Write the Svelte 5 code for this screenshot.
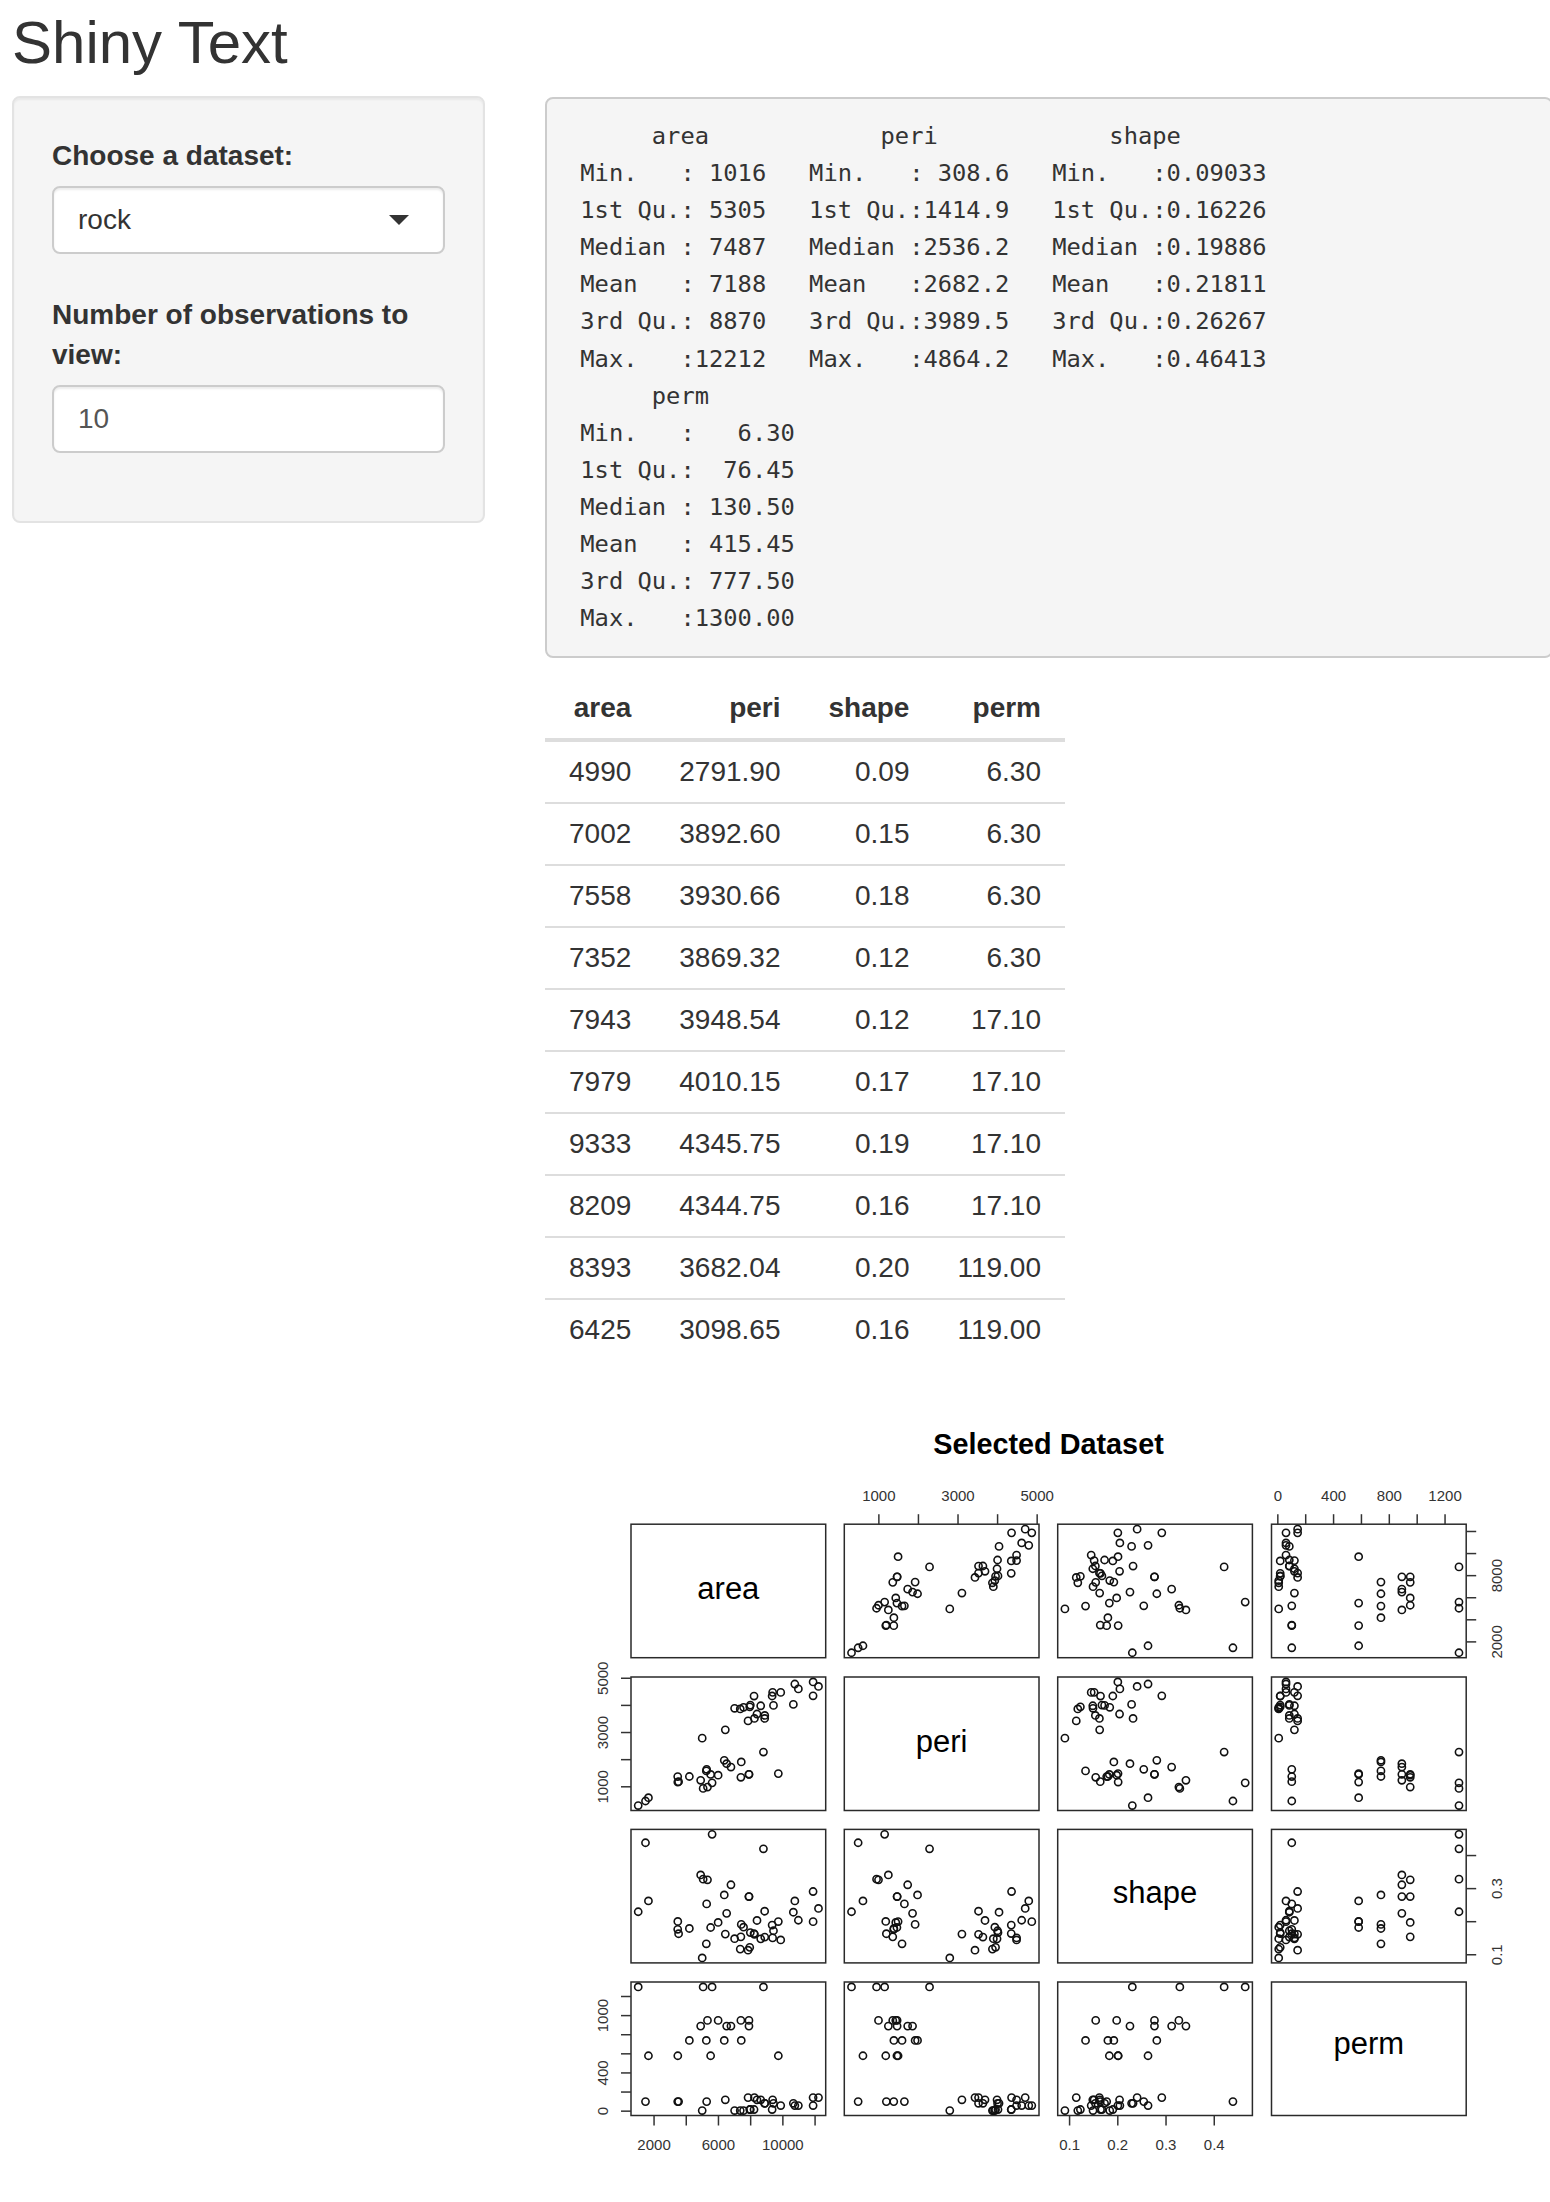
<script>
  // R's built-in rock dataset
  const rock = [
    [4990, 2791.9, 0.0903296, 6.3], [7002, 3892.6, 0.148622, 6.3], [7558, 3930.66, 0.183312, 6.3],
    [7352, 3869.32, 0.117063, 6.3], [7943, 3948.54, 0.122417, 17.1], [7979, 4010.15, 0.167045, 17.1],
    [9333, 4345.75, 0.189651, 17.1], [8209, 4344.75, 0.164127, 17.1], [8393, 3682.04, 0.203654, 119],
    [6425, 3098.65, 0.162394, 119], [9364, 4480.05, 0.150944, 119], [8624, 3986.24, 0.148141, 119],
    [10651, 4036.54, 0.228595, 82.4], [8868, 3518.04, 0.231623, 82.4], [9417, 3999.37, 0.172567, 82.4],
    [8874, 3629.07, 0.153481, 82.4], [10962, 4608.66, 0.204314, 58.6], [10743, 4787.62, 0.262727, 58.6],
    [11878, 4864.22, 0.200071, 58.6], [9867, 4479.41, 0.14481, 58.6], [7838, 3428.74, 0.113852, 142],
    [11876, 4353.14, 0.291229, 142], [12212, 4697.65, 0.240077, 142], [8233, 3518.44, 0.161865, 142],
    [6360, 1977.39, 0.280887, 740], [4193, 1379.35, 0.179455, 740], [7416, 1916.24, 0.191802, 740],
    [5246, 1585.42, 0.133083, 740], [6509, 1851.21, 0.225214, 890], [4895, 1239.66, 0.341273, 890],
    [6775, 1728.14, 0.311646, 890], [7894, 1461.06, 0.276016, 890], [5980, 1426.76, 0.197653, 950],
    [5318, 990.388, 0.326635, 950], [7392, 1350.76, 0.154192, 950], [7894, 1461.06, 0.276016, 950],
    [3469, 1376.7, 0.176969, 100], [1468, 476.322, 0.438712, 100], [3524, 1189.46, 0.163586, 100],
    [5267, 1644.96, 0.253832, 100], [5048, 941.543, 0.328641, 1300], [1016, 308.642, 0.230089, 1300],
    [5605, 1145.69, 0.464125, 1300], [8793, 2280.49, 0.420477, 1300], [3475, 1174.11, 0.200744, 580],
    [1651, 597.808, 0.262654, 580], [5514, 1455.88, 0.182453, 580], [9718, 1485.58, 0.200447, 580]
  ];
  const names = ['area', 'peri', 'shape', 'perm'];
  // baseline offset of the diagonal labels from the panel centre
  const nameDrop = [8, 8, 7, 5];

  const summary = `      area            peri            shape
 Min.   : 1016   Min.   : 308.6   Min.   :0.09033
 1st Qu.: 5305   1st Qu.:1414.9   1st Qu.:0.16226
 Median : 7487   Median :2536.2   Median :0.19886
 Mean   : 7188   Mean   :2682.2   Mean   :0.21811
 3rd Qu.: 8870   3rd Qu.:3989.5   3rd Qu.:0.26267
 Max.   :12212   Max.   :4864.2   Max.   :0.46413
      perm
 Min.   :   6.30
 1st Qu.:  76.45
 Median : 130.50
 Mean   : 415.45
 3rd Qu.: 777.50
 Max.   :1300.00`;

  // plot geometry, in page pixels (the svg viewBox starts at the page position)
  const panelW = 194.7;
  const panelH = 133.5;
  const colX = [631, 844.3, 1057.7, 1271.5];
  const rowY = [1523.2, 1676, 1828.4, 1981];

  const ranges = names.map((_, i) => {
    const v = rock.map((r) => r[i]);
    return [Math.min(...v), Math.max(...v)];
  });

  // par(usr) adds 4% each side
  function px(col, value) {
    const [lo, hi] = ranges[col];
    return colX[col] + (panelW * ((value - lo) / (hi - lo) + 0.04)) / 1.08;
  }
  function py(row, value) {
    const [lo, hi] = ranges[row];
    return rowY[row] + panelH - (panelH * ((value - lo) / (hi - lo) + 0.04)) / 1.08;
  }

  const panels = [];
  for (let r = 0; r < 4; r++) {
    for (let c = 0; c < 4; c++) panels.push({ r, c });
  }

  const topAxes = [
    { col: 1, ticks: [1000, 2000, 3000, 4000, 5000], labels: [1000, 3000, 5000] },
    { col: 3, ticks: [0, 200, 400, 600, 800, 1000, 1200], labels: [0, 400, 800, 1200] }
  ];
  const bottomAxes = [
    { col: 0, ticks: [2000, 4000, 6000, 8000, 10000, 12000], labels: [2000, 6000, 10000] },
    { col: 2, ticks: [0.1, 0.2, 0.3, 0.4], labels: [0.1, 0.2, 0.3, 0.4] }
  ];
  const leftAxes = [
    { row: 1, ticks: [1000, 2000, 3000, 4000, 5000], labels: [1000, 3000, 5000] },
    { row: 3, ticks: [0, 200, 400, 600, 800, 1000, 1200], labels: [0, 400, 1000] }
  ];
  const rightAxes = [
    { row: 0, ticks: [2000, 4000, 6000, 8000, 10000, 12000], labels: [2000, 8000] },
    { row: 2, ticks: [0.1, 0.2, 0.3, 0.4], labels: [0.1, 0.3] }
  ];
</script>

<div class="page">
  <h2>Shiny Text</h2>
  <div class="row">
    <aside class="well">
      <div class="group first">
        <label for="dataset">Choose a dataset:</label>
        <div class="select" id="dataset">
          <span>rock</span>
          <i class="caret"></i>
        </div>
      </div>
      <div class="group">
        <label for="obs">Number of observations to view:</label>
        <input id="obs" type="number" value="10" />
      </div>
    </aside>

    <main>
      <pre>{summary}</pre>

      <table>
        <thead>
          <tr>
            {#each names as name}
              <th>{name}</th>
            {/each}
          </tr>
        </thead>
        <tbody>
          {#each rock.slice(0, 10) as r}
            <tr>
              <td>{r[0]}</td>
              <td>{r[1].toFixed(2)}</td>
              <td>{r[2].toFixed(2)}</td>
              <td>{r[3].toFixed(2)}</td>
            </tr>
          {/each}
        </tbody>
      </table>

      <svg class="plot" width="1005" height="800" viewBox="545 1399 1005 800">
        <text class="title" x="1048.5" y="1453" text-anchor="middle">Selected Dataset</text>

        {#each panels as p}
          <rect class="box" x={colX[p.c]} y={rowY[p.r]} width={panelW} height={panelH} />
          {#if p.r === p.c}
            <text class="var" x={colX[p.c] + panelW / 2} y={rowY[p.r] + panelH / 2 + nameDrop[p.r]} text-anchor="middle">{names[p.r]}</text>
          {:else}
            {#each rock as d}
              <circle class="pt" cx={px(p.c, d[p.c])} cy={py(p.r, d[p.r])} r="3.6" />
            {/each}
          {/if}
        {/each}

        {#each topAxes as a}
          {#each a.ticks as t}
            <line class="tick" x1={px(a.col, t)} x2={px(a.col, t)} y1={rowY[0]} y2={rowY[0] - 10} />
          {/each}
          {#each a.labels as t}
            <text class="axis" x={px(a.col, t)} y="1500" text-anchor="middle">{t}</text>
          {/each}
        {/each}

        {#each bottomAxes as a}
          {#each a.ticks as t}
            <line class="tick" x1={px(a.col, t)} x2={px(a.col, t)} y1={rowY[3] + panelH} y2={rowY[3] + panelH + 10} />
          {/each}
          {#each a.labels as t}
            <text class="axis" x={px(a.col, t)} y="2148.5" text-anchor="middle">{t}</text>
          {/each}
        {/each}

        {#each leftAxes as a}
          {#each a.ticks as t}
            <line class="tick" x1={colX[0]} x2={colX[0] - 10} y1={py(a.row, t)} y2={py(a.row, t)} />
          {/each}
          {#each a.labels as t}
            <text class="axis" transform="translate(608 {py(a.row, t)}) rotate(-90)" text-anchor="middle">{t}</text>
          {/each}
        {/each}

        {#each rightAxes as a}
          {#each a.ticks as t}
            <line class="tick" x1={colX[3] + panelW} x2={colX[3] + panelW + 10} y1={py(a.row, t)} y2={py(a.row, t)} />
          {/each}
          {#each a.labels as t}
            <text class="axis" transform="translate(1501.5 {py(a.row, t)}) rotate(-90)" text-anchor="middle">{t}</text>
          {/each}
        {/each}
      </svg>
    </main>
  </div>
</div>

<style>
  :global(body) {
    margin: 0;
    background: #fff;
    overflow-x: hidden;
  }

  .page {
    width: 1550px;
    padding-left: 12px;
    box-sizing: border-box;
    overflow: hidden;
    font-family: "Liberation Sans", Arial, sans-serif;
    font-size: 28px;
    line-height: 40px;
    color: #333;
  }

  h2 {
    margin: 10px 0 20px;
    font-size: 60px;
    font-weight: 400;
    line-height: 66px;
  }

  .row {
    display: flex;
    align-items: flex-start;
    gap: 60px;
  }

  .well {
    flex: none;
    width: 473px;
    box-sizing: border-box;
    padding: 38px;
    background: #f5f5f5;
    border: 2px solid #e3e3e3;
    border-radius: 8px;
    box-shadow: inset 0 2px 2px rgba(0, 0, 0, 0.05);
  }

  .group {
    margin-bottom: 30px;
  }

  .group.first {
    margin-bottom: 41px;
  }

  label {
    display: block;
    margin-bottom: 10px;
    font-weight: 700;
  }

  .select,
  input {
    display: flex;
    align-items: center;
    justify-content: space-between;
    width: 100%;
    height: 68px;
    box-sizing: border-box;
    padding: 0 24px;
    background: #fff;
    border: 2px solid #ccc;
    border-radius: 8px;
    box-shadow: inset 0 2px 2px rgba(0, 0, 0, 0.075);
    font: inherit;
  }

  .select {
    color: #333;
    padding-right: 34px;
  }

  input {
    color: #555;
  }

  .caret {
    width: 0;
    height: 0;
    border-style: solid;
    border-width: 10px 10px 0;
    border-color: #333 transparent transparent;
  }

  main {
    flex: none;
    width: 1008px;
    margin-top: 1px;
  }

  pre {
    margin: 0 0 20px;
    padding: 19px;
    background: #f5f5f5;
    border: 2px solid #ccc;
    border-radius: 8px;
    font-family: "DejaVu Sans Mono", monospace;
    font-size: 23.75px;
    line-height: 37.1px;
    color: #333;
    overflow: hidden;
  }

  table {
    border-collapse: collapse;
    margin-bottom: 40px;
  }

  th,
  td {
    padding: 10px 24px;
    text-align: right;
  }

  th {
    font-weight: 700;
    border-bottom: 4px solid #ddd;
  }

  td {
    border-top: 2px solid #ddd;
  }

  tbody tr:first-child td {
    border-top: 0;
  }

  .plot {
    display: block;
  }

  .box {
    fill: none;
    stroke: #2a2a2a;
    stroke-width: 1.5;
  }

  .pt {
    fill: none;
    stroke: #111;
    stroke-width: 1.6;
  }

  .tick {
    stroke: #333;
    stroke-width: 1.5;
  }

  .title {
    font-size: 28.8px;
    font-weight: 700;
    fill: #000;
  }

  .var {
    font-size: 31px;
    fill: #000;
  }

  .axis {
    font-size: 15px;
    fill: #333;
  }
</style>
